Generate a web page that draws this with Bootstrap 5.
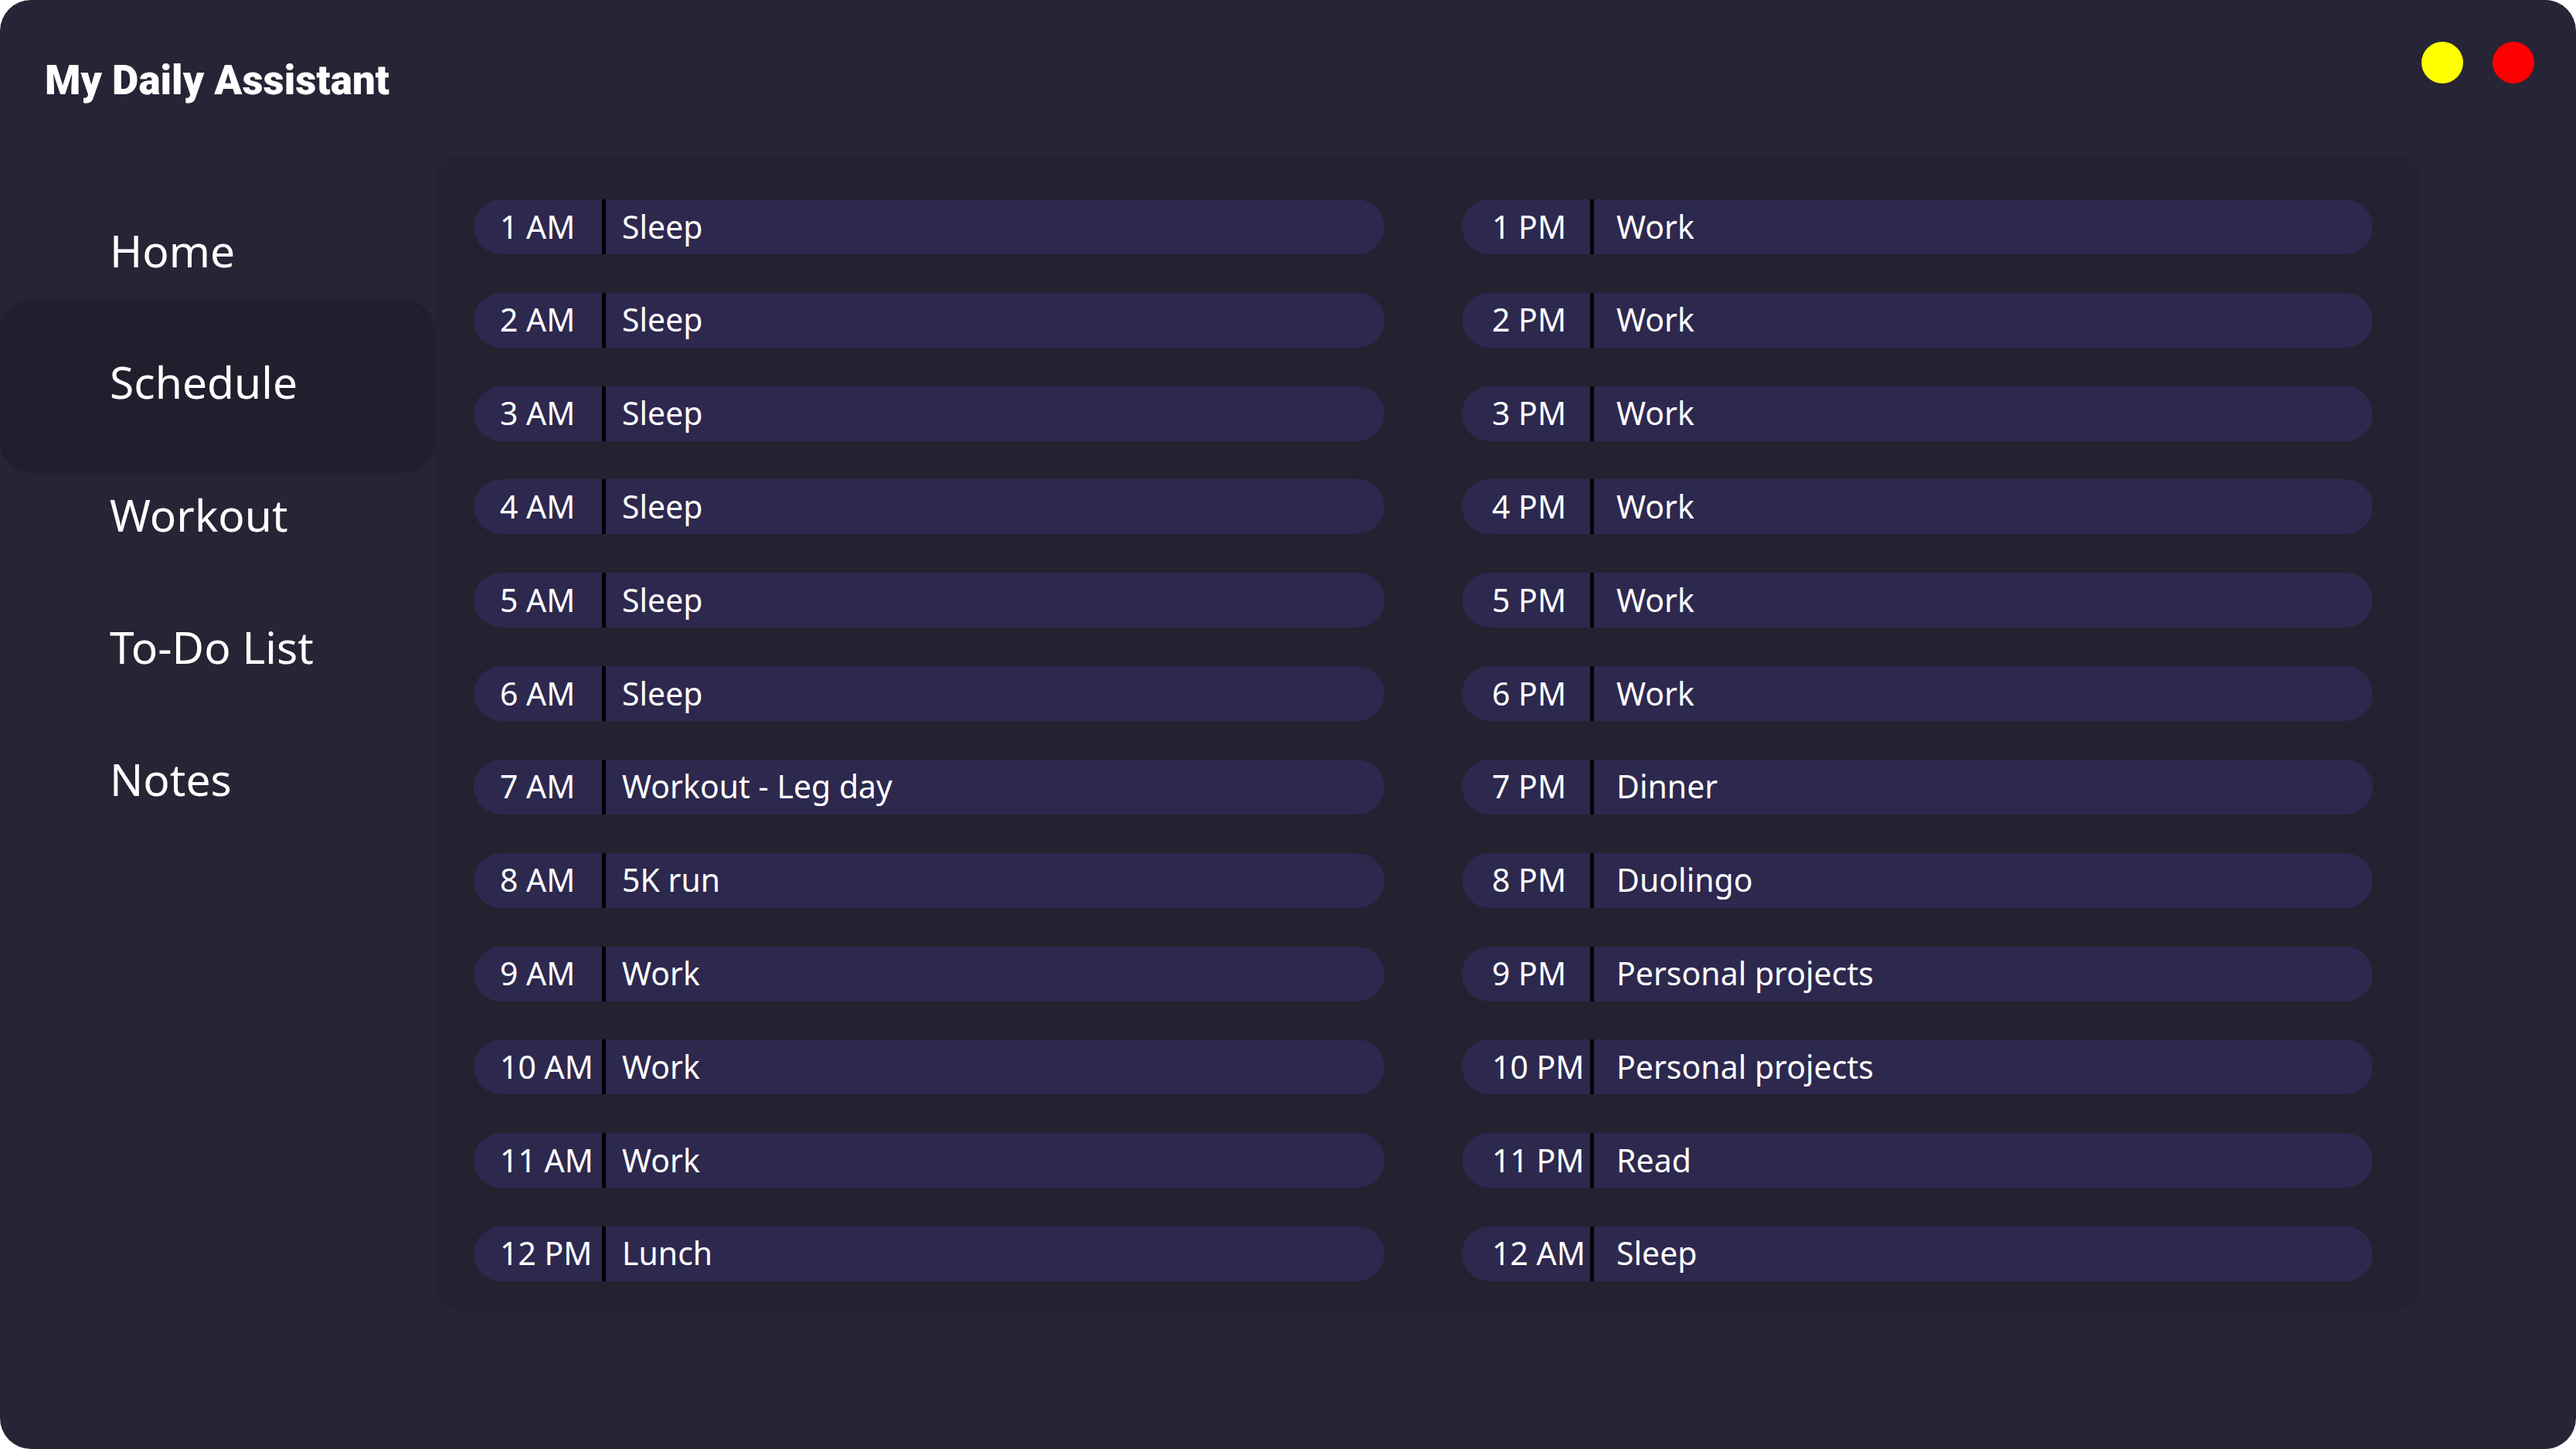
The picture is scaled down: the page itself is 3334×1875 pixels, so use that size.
<!DOCTYPE html>
<html lang="en">
<head>
<meta charset="utf-8">
<meta name="viewport" content="width=device-width, initial-scale=1">
<title>My Daily Assistant</title>
<link href="https://cdn.jsdelivr.net/npm/bootstrap@5.3.0/dist/css/bootstrap.min.css" rel="stylesheet">
<style>
  body { background: #fff; font-family: "Noto Sans", "Open Sans", sans-serif; color: #fff; }
  .app-window { background: #272436; border-radius: 40px; }
  .app-header { height: 200px; padding: 54px 54px 0 58px; }
  .app-title { font-family: Roboto, "Liberation Sans", sans-serif; font-weight: 900; font-size: 53px; line-height: 100px; }
  .win-dots { gap: 38px; }
  .win-dot { width: 54px; height: 54px; }
  .dot-min { background: #ff0; }
  .dot-close { background: #f00; }
  .side-menu { flex: 0 0 562px; padding-top: 44px; }
  .side-menu .nav-link { height: 171px; padding: 0 0 12px 142px; font-size: 57px; line-height: 72px; color: #fff; border-radius: 40px; }
  .side-menu .nav-link.active { height: 224px; margin: -27px 0 -26px; background: #211e2d; }
  .schedule { background: #242130; border-radius: 40px; gap: 100px; padding: 58px 63px 38px 51px; margin: 0 200px 179px 0; min-width: 0; }
  .slots { flex: 1 1 0; gap: 16px; --time-inset: 34px; --task-inset: 21px; }
  .slots-pm { --time-inset: 39px; --task-inset: 29px; }
  .slot { height: 71px; background: #2d284e; font-size: 41px; line-height: 56px; }
  .slot-time { flex: 0 0 166px; padding: 0 0 2px var(--time-inset); }
  .slot-task { border-left: 5px solid #000; padding: 0 0 2px var(--task-inset); }
</style>
</head>
<body>
<div class="app-window d-flex flex-column min-vh-100">
  <header class="app-header d-flex justify-content-between align-items-start">
    <h1 class="app-title m-0 text-nowrap">My Daily Assistant</h1>
    <div class="win-dots d-flex">
      <button type="button" class="win-dot dot-min btn rounded-circle border-0 p-0" aria-label="Minimize"></button>
      <button type="button" class="win-dot dot-close btn rounded-circle border-0 p-0" aria-label="Close"></button>
    </div>
  </header>
  <div class="d-flex flex-fill">
    <nav class="side-menu nav flex-column">
      <a class="nav-link d-flex align-items-center" href="#">Home</a>
      <a class="nav-link d-flex align-items-center active" aria-current="page" href="#">Schedule</a>
      <a class="nav-link d-flex align-items-center" href="#">Workout</a>
      <a class="nav-link d-flex align-items-center" href="#">To-Do List</a>
      <a class="nav-link d-flex align-items-center" href="#">Notes</a>
    </nav>
    <main class="schedule d-flex flex-fill">
      <ul class="slots list-unstyled d-flex flex-column justify-content-between m-0">
        <li class="slot d-flex rounded-pill overflow-hidden"><span class="slot-time d-flex align-items-center text-nowrap">1 AM</span><span class="slot-task d-flex align-items-center flex-fill">Sleep</span></li>
        <li class="slot d-flex rounded-pill overflow-hidden"><span class="slot-time d-flex align-items-center text-nowrap">2 AM</span><span class="slot-task d-flex align-items-center flex-fill">Sleep</span></li>
        <li class="slot d-flex rounded-pill overflow-hidden"><span class="slot-time d-flex align-items-center text-nowrap">3 AM</span><span class="slot-task d-flex align-items-center flex-fill">Sleep</span></li>
        <li class="slot d-flex rounded-pill overflow-hidden"><span class="slot-time d-flex align-items-center text-nowrap">4 AM</span><span class="slot-task d-flex align-items-center flex-fill">Sleep</span></li>
        <li class="slot d-flex rounded-pill overflow-hidden"><span class="slot-time d-flex align-items-center text-nowrap">5 AM</span><span class="slot-task d-flex align-items-center flex-fill">Sleep</span></li>
        <li class="slot d-flex rounded-pill overflow-hidden"><span class="slot-time d-flex align-items-center text-nowrap">6 AM</span><span class="slot-task d-flex align-items-center flex-fill">Sleep</span></li>
        <li class="slot d-flex rounded-pill overflow-hidden"><span class="slot-time d-flex align-items-center text-nowrap">7 AM</span><span class="slot-task d-flex align-items-center flex-fill">Workout - Leg day</span></li>
        <li class="slot d-flex rounded-pill overflow-hidden"><span class="slot-time d-flex align-items-center text-nowrap">8 AM</span><span class="slot-task d-flex align-items-center flex-fill">5K run</span></li>
        <li class="slot d-flex rounded-pill overflow-hidden"><span class="slot-time d-flex align-items-center text-nowrap">9 AM</span><span class="slot-task d-flex align-items-center flex-fill">Work</span></li>
        <li class="slot d-flex rounded-pill overflow-hidden"><span class="slot-time d-flex align-items-center text-nowrap">10 AM</span><span class="slot-task d-flex align-items-center flex-fill">Work</span></li>
        <li class="slot d-flex rounded-pill overflow-hidden"><span class="slot-time d-flex align-items-center text-nowrap">11 AM</span><span class="slot-task d-flex align-items-center flex-fill">Work</span></li>
        <li class="slot d-flex rounded-pill overflow-hidden"><span class="slot-time d-flex align-items-center text-nowrap">12 PM</span><span class="slot-task d-flex align-items-center flex-fill">Lunch</span></li>
      </ul>
      <ul class="slots slots-pm list-unstyled d-flex flex-column justify-content-between m-0">
        <li class="slot d-flex rounded-pill overflow-hidden"><span class="slot-time d-flex align-items-center text-nowrap">1 PM</span><span class="slot-task d-flex align-items-center flex-fill">Work</span></li>
        <li class="slot d-flex rounded-pill overflow-hidden"><span class="slot-time d-flex align-items-center text-nowrap">2 PM</span><span class="slot-task d-flex align-items-center flex-fill">Work</span></li>
        <li class="slot d-flex rounded-pill overflow-hidden"><span class="slot-time d-flex align-items-center text-nowrap">3 PM</span><span class="slot-task d-flex align-items-center flex-fill">Work</span></li>
        <li class="slot d-flex rounded-pill overflow-hidden"><span class="slot-time d-flex align-items-center text-nowrap">4 PM</span><span class="slot-task d-flex align-items-center flex-fill">Work</span></li>
        <li class="slot d-flex rounded-pill overflow-hidden"><span class="slot-time d-flex align-items-center text-nowrap">5 PM</span><span class="slot-task d-flex align-items-center flex-fill">Work</span></li>
        <li class="slot d-flex rounded-pill overflow-hidden"><span class="slot-time d-flex align-items-center text-nowrap">6 PM</span><span class="slot-task d-flex align-items-center flex-fill">Work</span></li>
        <li class="slot d-flex rounded-pill overflow-hidden"><span class="slot-time d-flex align-items-center text-nowrap">7 PM</span><span class="slot-task d-flex align-items-center flex-fill">Dinner</span></li>
        <li class="slot d-flex rounded-pill overflow-hidden"><span class="slot-time d-flex align-items-center text-nowrap">8 PM</span><span class="slot-task d-flex align-items-center flex-fill">Duolingo</span></li>
        <li class="slot d-flex rounded-pill overflow-hidden"><span class="slot-time d-flex align-items-center text-nowrap">9 PM</span><span class="slot-task d-flex align-items-center flex-fill">Personal projects</span></li>
        <li class="slot d-flex rounded-pill overflow-hidden"><span class="slot-time d-flex align-items-center text-nowrap">10 PM</span><span class="slot-task d-flex align-items-center flex-fill">Personal projects</span></li>
        <li class="slot d-flex rounded-pill overflow-hidden"><span class="slot-time d-flex align-items-center text-nowrap">11 PM</span><span class="slot-task d-flex align-items-center flex-fill">Read</span></li>
        <li class="slot d-flex rounded-pill overflow-hidden"><span class="slot-time d-flex align-items-center text-nowrap">12 AM</span><span class="slot-task d-flex align-items-center flex-fill">Sleep</span></li>
      </ul>
    </main>
  </div>
</div>
<script src="https://cdn.jsdelivr.net/npm/bootstrap@5.3.0/dist/js/bootstrap.bundle.min.js"></script>
</body>
</html>
